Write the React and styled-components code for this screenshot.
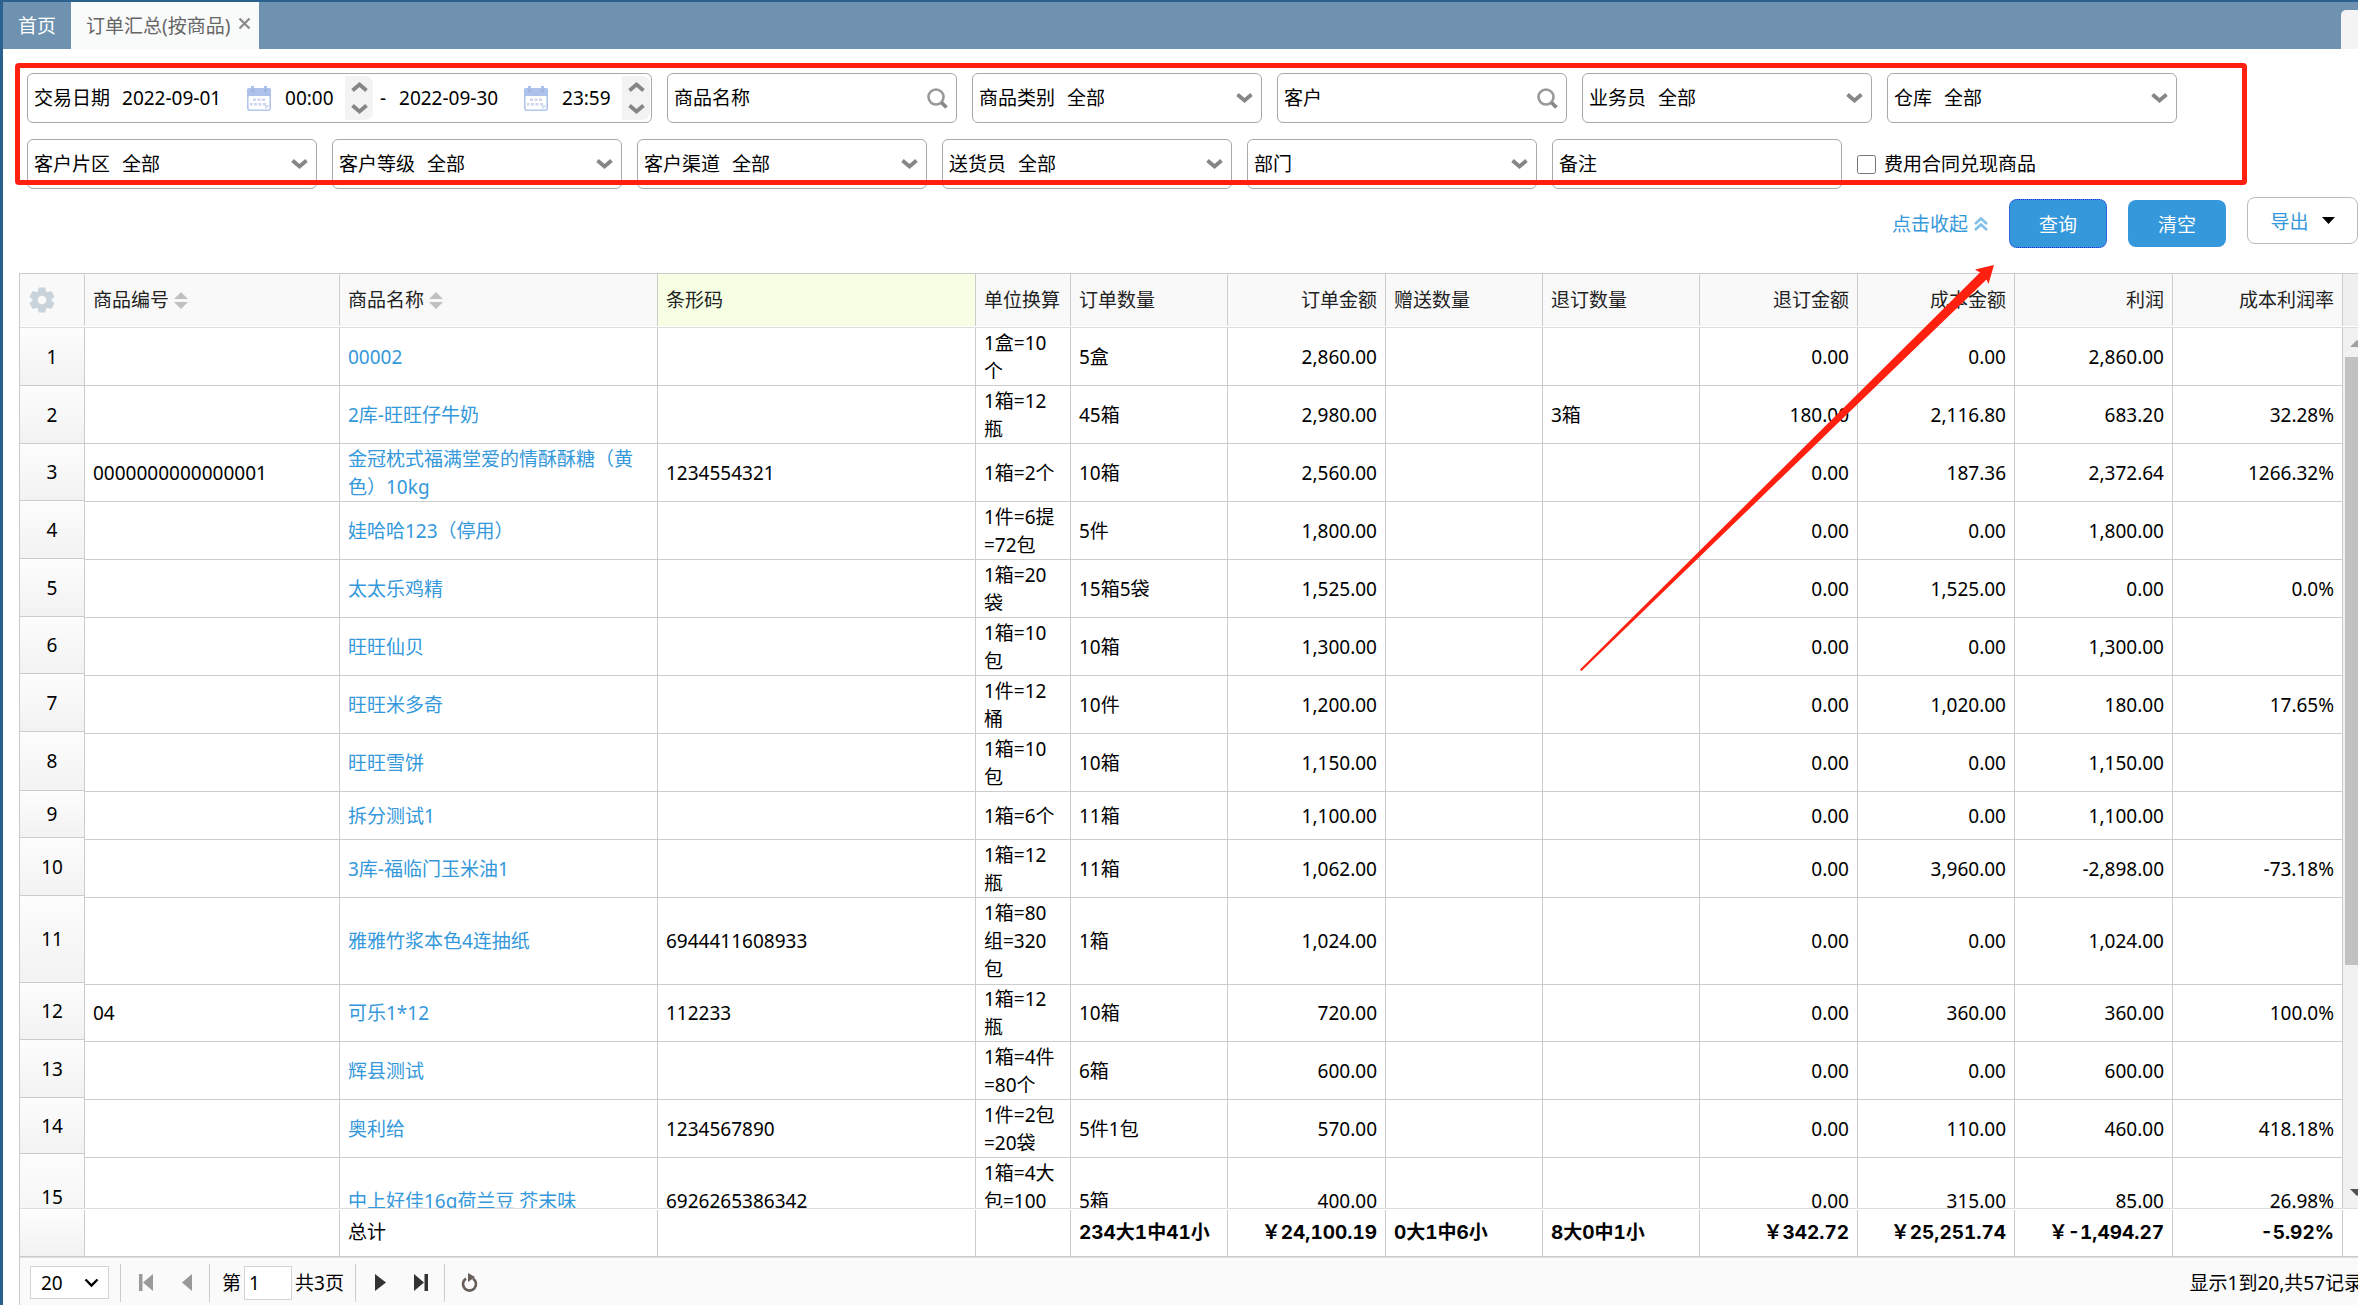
import React from "react";
import styled, { createGlobalStyle } from "styled-components";

const font = '"Noto Sans", "Noto Sans CJK SC", sans-serif';
const boldFont = 'Inter, "Noto Sans CJK SC", sans-serif';
const blue = "#3498db";
const line = "#cccccc";
const softLine = "#dddddd";
const red = "#ff2010";

const Global = createGlobalStyle`
  * { box-sizing: border-box; }
  body { margin: 0; background: #fff; overflow: hidden; }
  body, button, input, select { font-family: ${font}; font-size: 19px; color: #000; }
`;

const Page = styled.div`
  position: relative;
  display: flex;
  flex-direction: column;
  height: 100vh;
  min-height: 600px;
  border-top: 2px solid #2b618f;
  border-left: 3px solid #2b618f;
  overflow: hidden;
  line-height: 28px;
`;

/* ---------- tabs ---------- */
const TabBar = styled.nav`
  display: flex;
  flex: none;
  height: 47px;
  background: #6e92b0;
`;
const Tab = styled.div`
  display: flex;
  align-items: center;
  gap: 8px;
  padding: ${(p) => (p.$active ? "0 8px 0 15px" : "0 15px")};
  background: ${(p) => (p.$active ? "#f9fafa" : "transparent")};
`;
const TabLink = styled.a`
  color: ${(p) => (p.$active ? "#666" : "#fff")};
  text-decoration: none;
  white-space: nowrap;
`;
const PlainButton = styled.button`
  display: flex;
  align-items: center;
  justify-content: center;
  flex: none;
  padding: 0;
  border: 0;
  background: none;
`;
const CloseButton = styled(PlainButton)`
  align-self: flex-start;
  margin-top: 15px;
`;
const TabMenu = styled(PlainButton)`
  width: 17px;
  height: 39px;
  margin: 8px 0 0 auto;
  border-radius: 5px 0 0 0;
  background: #f4f4f4;
`;

/* ---------- filters ---------- */
const Filters = styled.form`
  position: relative;
  display: flex;
  flex: none;
  flex-direction: column;
  gap: 16px;
  padding: 24px 24px 0;
`;
const FilterRow = styled.div`
  display: flex;
  gap: 15px;
`;
const Field = styled.div`
  display: flex;
  align-items: center;
  width: ${(p) => (p.$wide ? "625px" : "290px")};
  height: 50px;
  padding: 0 ${(p) => (p.$wide ? "2px" : "8px")} 0 6px;
  border: 1px solid #a9a9a9;
  border-radius: 6px;
  background: #fff;
`;
const Label = styled.label`
  flex: none;
  margin-right: 12px;
`;
const TextBox = styled.input`
  flex: ${(p) => (p.$width ? "none" : "1")};
  width: ${(p) => p.$width || "auto"};
  min-width: 0;
  height: 28px;
  padding: 0;
  border: 0;
  outline: 0;
  background: none;
`;
const Select = styled.select`
  flex: 1;
  min-width: 0;
  height: 28px;
  margin-right: -17px;
  padding: 0;
  border: 0;
  outline: 0;
  appearance: none;
  background: none;
`;
const CalendarButton = styled(PlainButton)`
  margin-right: 14px;
`;
const Spinner = styled.div`
  display: flex;
  flex: none;
  flex-direction: column;
  justify-content: space-between;
  width: 28px;
  height: 44px;
  padding: 6px 0;
  border-radius: 0 8px 8px 0;
  background: #f3f3f3;
`;
const Dash = styled.span`
  width: 26px;
  flex: none;
  padding-left: 7px;
`;
const CheckField = styled.label`
  display: flex;
  align-items: center;
  gap: 8px;
`;
const CheckBox = styled.input`
  width: 19px;
  height: 19px;
  margin: 0;
`;
const Highlight = styled.div`
  position: absolute;
  top: 14px;
  right: 111px;
  bottom: 4px;
  left: 12px;
  border: 5px solid ${red};
  border-radius: 4px;
  pointer-events: none;
`;

/* ---------- actions ---------- */
const Actions = styled.div`
  display: flex;
  flex: none;
  align-items: center;
  justify-content: flex-end;
  gap: 21px;
  height: 53px;
  margin: 8px 0 23px;
`;
const Collapse = styled.a`
  display: flex;
  align-items: center;
  gap: 6px;
  color: ${blue};
  text-decoration: none;
`;
const Primary = styled.button`
  width: 98px;
  height: ${(p) => (p.$focused ? "49px" : "47px")};
  padding: 0;
  border: ${(p) => (p.$focused ? "1px dotted #2a2ae0" : "0")};
  border-radius: 8px;
  background: ${blue};
  color: #fff;
`;
const ExportButton = styled.button`
  display: flex;
  align-items: center;
  justify-content: center;
  align-self: flex-start;
  gap: 13px;
  width: 111px;
  height: 47px;
  padding: 0;
  border: 1px solid #bbb;
  border-radius: 8px;
  background: #fff;
  color: ${blue};
`;

/* ---------- grid ---------- */
const Grid = styled.section`
  display: flex;
  flex: 1;
  flex-direction: column;
  min-height: 0;
  margin-left: 16px;
  border-left: 1px solid ${line};
`;
const Band = styled.div`
  display: flex;
  flex: none;
`;
const HeadBand = styled(Band)`
  height: 55px;
  padding-bottom: 1px;
  border-top: 1px solid ${line};
  border-bottom: 1px solid ${softLine};
`;
const BodyBand = styled(Band)`
  flex: 1;
  align-items: flex-start;
  min-height: 0;
  overflow: hidden;
`;
const FootBand = styled(Band)`
  height: 49px;
  padding-top: 1px;
  border-top: 1px solid ${softLine};
  border-bottom: 1px solid ${line};
  font-family: ${boldFont};
`;
const Table = styled.table`
  flex: 1;
  width: 0;
  border-spacing: 0;
  table-layout: fixed;
`;
const Numbers = styled.table`
  flex: none;
  width: 65px;
  border-spacing: 0;
  table-layout: fixed;
`;
const Head = styled.th`
  height: 52px;
  padding: 0 8px;
  border-right: 1px solid ${line};
  background: ${(p) => (p.$marked ? "#f6ffe3" : "#f9f9f9")};
  color: #222;
  font-weight: 400;
  text-align: ${(p) => (p.$right ? "right" : "left")};
  white-space: nowrap;
`;
const Sortable = styled.span`
  display: flex;
  align-items: center;
  gap: 5px;
`;
const Row = styled.tr`
  height: ${(p) => p.$height}px;
`;
const Cell = styled.td`
  padding: 0 8px;
  border-right: 1px solid ${line};
  border-bottom: 1px solid ${line};
  text-align: ${(p) => (p.$right ? "right" : "left")};
`;
const NumberCell = styled.th`
  padding: 0;
  border-right: 1px solid ${line};
  border-bottom: 1px solid ${line};
  background: linear-gradient(#fdfdfd, #f2f2f2);
  font-weight: 400;
`;
const TotalCell = styled(Cell)`
  height: 46px;
  border-bottom: 0;
  font-weight: ${(p) => (p.$plain ? 400 : 700)};
  font-variant-numeric: tabular-nums;
  white-space: nowrap;
`;
const TotalNumber = styled(NumberCell)`
  height: 46px;
  border-bottom: 0;
`;
const GearCell = styled(Head)`
  padding: 0 0 0 9px;
`;
const ProductLink = styled.a`
  color: ${blue};
  text-decoration: none;
`;
const Edge = styled.div`
  flex: none;
  width: 15px;
  background: ${(p) => (p.$filled ? "#efefef" : "#fff")};
`;
const Scroll = styled(Edge)`
  display: flex;
  flex-direction: column;
  justify-content: space-between;
  align-self: stretch;
  padding: 12px 0 12px 2px;
  background: #f1f1f1;
  overflow: hidden;
`;
const Track = styled.div`
  flex: 1;
  padding: 10px 0;
`;
const Thumb = styled.div`
  height: 74%;
  background: #c1c1c1;
`;

/* ---------- pager ---------- */
const Pager = styled.footer`
  display: flex;
  flex: none;
  align-items: center;
  height: 48px;
  padding: 2px 0 0 10px;
  border-top: 1px solid ${softLine};
  background: #fafafa;
  overflow: hidden;
`;
const PageSize = styled.div`
  display: flex;
  align-items: center;
  width: 79px;
  height: 33px;
  padding: 0 9px 0 10px;
  border: 1px solid #d4d4d4;
  background: #fff;
`;
const Divider = styled.span`
  width: 1px;
  height: 38px;
  margin: 0 ${(p) => (p.$wide ? "12px" : "10px")} 0 11px;
  background: ${line};
`;
const PageInput = styled.input`
  width: 48px;
  height: 34px;
  margin: 0 3px;
  padding: 0 4px;
  border: 1px solid #d4d4d4;
  background: #fff;
`;
const PageButtons = styled.div`
  display: flex;
  gap: 12px;
  margin-right: -3px;
`;
const PageButton = styled(PlainButton)`
  width: 29px;
  height: 30px;
`;
const Status = styled.span`
  flex: none;
  margin: 0 -5px 0 auto;
  white-space: nowrap;
`;

const Arrow = styled.svg`
  position: absolute;
  top: 263px;
  right: 364px;
  pointer-events: none;
`;

/* ---------- icons ---------- */
const Glyph = styled.svg`
  display: block;
  flex: none;
  pointer-events: none;
`;
const Chevron = ({ up }) => (
  <Glyph width="17" height="10" viewBox="0 0 17 10">
    <path d={up ? "M1.500 8.500 8.500 2.500 15.500 8.500" : "M1.500 1.500 8.500 7.500 15.500 1.500"} fill="none" stroke="#868686" strokeWidth="3.800" />
  </Glyph>
);
const Search = () => (
  <Glyph width="21" height="21" viewBox="0 0 21 21">
    <circle cx="9" cy="9" r="7.500" fill="none" stroke="#999" strokeWidth="2.600" />
    <path d="M14.500 14.500 19.500 19.500" stroke="#888" strokeWidth="3.800" />
  </Glyph>
);
const Calendar = () => (
  <Glyph width="24" height="25" viewBox="0 0 24 25">
    <rect x="0.800" y="3" width="22.400" height="21.300" rx="2" fill="#fff" stroke="#b2c6ec" strokeWidth="1.600" />
    <path d="M0 4a2 2 0 0 1 2-2h2V0h3v2h10V0h3v2h2a2 2 0 0 1 2 2v6H0z" fill="#adc2ea" />
    <path d="M4 3h3v3H4zM17 3h3v3h-3z" fill="#9fb4e0" />
    <path d="M6 12.500h3v2.500H6zM10.500 12.500h3v2.500h-3zM15 12.500h3v2.500h-3zM3 17h2.500v2.500H3zM7 17h3v2.500H7zM11.500 17h3v2.500h-3zM16 17h3v2.500h-3z" fill="#ccd6ee" />
    <path d="M18 24v-5h5z" fill="#d5e0f5" />
  </Glyph>
);
const Gear = () => (
  <Glyph width="26" height="26" viewBox="0 0 24 24">
    <path fillRule="evenodd" fill="#c9d3dc" d="M9 0.500h6l.7 3.500 1.500.9 3.400-1.200 3 5.200-2.700 2.300v1.600l2.700 2.300-3 5.200-3.400-1.200-1.500.9-.7 3.500H9l-.7-3.500-1.500-.9-3.400 1.200-3-5.200 2.700-2.300v-1.600L.4 8.900l3-5.200 3.400 1.200 1.500-.9zM12 8a4 4 0 1 0 0 8 4 4 0 0 0 0-8z" />
  </Glyph>
);
const SortIcon = () => (
  <Glyph width="14" height="17" viewBox="0 0 14 17">
    <path d="M0 7 7 0l7 7zM0 10h14l-7 7z" fill="#c0c0c0" />
  </Glyph>
);
const Collapser = () => (
  <Glyph width="14" height="14" viewBox="0 0 14 14">
    <path d="M1 7 7 1.500 13 7M1 13 7 7.500 13 13" fill="none" stroke="#7fbfea" strokeWidth="2.600" />
  </Glyph>
);

/* ---------- data ---------- */
const columns = [
  { title: "商品编号", width: 255, sortable: true },
  { title: "商品名称", width: 318, sortable: true },
  { title: "条形码", width: 318, marked: true },
  { title: "单位换算", width: 95 },
  { title: "订单数量", width: 157 },
  { title: "订单金额", width: 158, right: true },
  { title: "赠送数量", width: 157 },
  { title: "退订数量", width: 157 },
  { title: "退订金额", width: 158, right: true },
  { title: "成本金额", width: 157, right: true },
  { title: "利润", width: 158, right: true },
  { title: "成本利润率", width: 170, right: true },
];

const rows = [
  [58, 58, "", "00002", "", "1盒=10个", "5盒", "2,860.00", "", "", "0.00", "0.00", "2,860.00", ""],
  [58, 58, "", "2库-旺旺仔牛奶", "", "1箱=12瓶", "45箱", "2,980.00", "", "3箱", "180.00", "2,116.80", "683.20", "32.28%"],
  [58, 57, "0000000000000001", "金冠枕式福满堂爱的情酥酥糖（黄色）10kg", "1234554321", "1箱=2个", "10箱", "2,560.00", "", "", "0.00", "187.36", "2,372.64", "1266.32%"],
  [58, 58, "", "娃哈哈123（停用）", "", "1件=6提=72包", "5件", "1,800.00", "", "", "0.00", "0.00", "1,800.00", ""],
  [58, 58, "", "太太乐鸡精", "", "1箱=20袋", "15箱5袋", "1,525.00", "", "", "0.00", "1,525.00", "0.00", "0.0%"],
  [58, 57, "", "旺旺仙贝", "", "1箱=10包", "10箱", "1,300.00", "", "", "0.00", "0.00", "1,300.00", ""],
  [58, 58, "", "旺旺米多奇", "", "1件=12桶", "10件", "1,200.00", "", "", "0.00", "1,020.00", "180.00", "17.65%"],
  [58, 59, "", "旺旺雪饼", "", "1箱=10包", "10箱", "1,150.00", "", "", "0.00", "0.00", "1,150.00", ""],
  [48, 47, "", "拆分测试1", "", "1箱=6个", "11箱", "1,100.00", "", "", "0.00", "0.00", "1,100.00", ""],
  [58, 58, "", "3库-福临门玉米油1", "", "1箱=12瓶", "11箱", "1,062.00", "", "", "0.00", "3,960.00", "-2,898.00", "-73.18%"],
  [87, 87, "", "雅雅竹浆本色4连抽纸", "6944411608933", "1箱=80组=320包", "1箱", "1,024.00", "", "", "0.00", "0.00", "1,024.00", ""],
  [57, 57, "04", "可乐1*12", "112233", "1箱=12瓶", "10箱", "720.00", "", "", "0.00", "360.00", "360.00", "100.0%"],
  [58, 58, "", "辉县测试", "", "1箱=4件=80个", "6箱", "600.00", "", "", "0.00", "0.00", "600.00", ""],
  [58, 56, "", "奥利给", "1234567890", "1件=2包=20袋", "5件1包", "570.00", "", "", "0.00", "110.00", "460.00", "418.18%"],
  [87, 87, "", "中上好佳16g荷兰豆 芥末味", "6926265386342", "1箱=4大包=100包", "5箱", "400.00", "", "", "0.00", "315.00", "85.00", "26.98%"],
];

const totals = ["", "总计", "", "", "234大1中41小", "￥24,100.19", "0大1中6小", "8大0中1小", "￥342.72", "￥25,251.74", "￥-1,494.27", "-5.92%"];

const Columns = () => (
  <colgroup>
    {columns.map((c) => (
      <col key={c.title} width={c.width} />
    ))}
  </colgroup>
);

const Choice = ({ id, label, value = "全部" }) => (
  <Field>
    <Label htmlFor={id}>{label}</Label>
    <Select id={id} defaultValue={value}>
      <option value={value}>{value}</option>
    </Select>
    <Chevron />
  </Field>
);

const TextField = ({ id, label, search }) => (
  <Field>
    <Label htmlFor={id}>{label}</Label>
    <TextBox id={id} type="text" />
    {search && (
      <PlainButton type="button" aria-label={label}>
        <Search />
      </PlainButton>
    )}
  </Field>
);

const Moment = ({ id, date, time }) => (
  <>
    <TextBox id={id} type="text" defaultValue={date} $width="125px" aria-label="日期" />
    <CalendarButton type="button" aria-label="日历">
      <Calendar />
    </CalendarButton>
    <TextBox type="text" defaultValue={time} $width="60px" aria-label="时间" />
    <Spinner>
      <PlainButton type="button" aria-label="+">
        <Chevron up />
      </PlainButton>
      <PlainButton type="button" aria-label="-">
        <Chevron />
      </PlainButton>
    </Spinner>
  </>
);

export default function App() {
  return (
    <Page>
      <Global />
      <TabBar>
        <Tab>
          <TabLink href="#home">首页</TabLink>
        </Tab>
        <Tab $active>
          <TabLink href="#orders" $active>订单汇总(按商品)</TabLink>
          <CloseButton type="button" aria-label="关闭">
            <Glyph width="13" height="13" viewBox="0 0 13 13">
              <path d="M1.500 1.500 11.500 11.500M11.500 1.500 1.500 11.500" stroke="#8a8a8a" strokeWidth="2.200" />
            </Glyph>
          </CloseButton>
        </Tab>
        <TabMenu type="button" aria-label="菜单" />
      </TabBar>

      <Filters onSubmit={(e) => e.preventDefault()}>
        <FilterRow>
          <Field $wide>
            <Label htmlFor="from">交易日期</Label>
            <Moment id="from" date="2022-09-01" time="00:00" />
            <Dash>-</Dash>
            <Moment id="to" date="2022-09-30" time="23:59" />
          </Field>
          <TextField id="product" label="商品名称" search />
          <Choice id="category" label="商品类别" />
          <TextField id="customer" label="客户" search />
          <Choice id="salesman" label="业务员" />
          <Choice id="warehouse" label="仓库" />
        </FilterRow>
        <FilterRow>
          <Choice id="area" label="客户片区" />
          <Choice id="level" label="客户等级" />
          <Choice id="channel" label="客户渠道" />
          <Choice id="courier" label="送货员" />
          <Choice id="department" label="部门" value="" />
          <TextField id="remark" label="备注" />
          <CheckField>
            <CheckBox type="checkbox" />
            费用合同兑现商品
          </CheckField>
        </FilterRow>
        <Highlight />
      </Filters>

      <Actions>
        <Collapse href="#collapse">
          点击收起
          <Collapser />
        </Collapse>
        <Primary type="button" $focused>查询</Primary>
        <Primary type="button">清空</Primary>
        <ExportButton type="button">
          导出
          <Glyph width="13" height="7" viewBox="0 0 13 7">
            <path d="M0 0h13L6.500 7z" fill="#000" />
          </Glyph>
        </ExportButton>
      </Actions>

      <Grid>
        <HeadBand>
          <Numbers>
            <thead>
              <tr>
                <GearCell>
                  <Gear />
                </GearCell>
              </tr>
            </thead>
          </Numbers>
          <Table>
            <Columns />
            <thead>
              <tr>
                {columns.map((c) => (
                  <Head key={c.title} $right={c.right} $marked={c.marked}>
                    {c.sortable ? (
                      <Sortable>
                        {c.title}
                        <SortIcon />
                      </Sortable>
                    ) : (
                      c.title
                    )}
                  </Head>
                ))}
              </tr>
            </thead>
          </Table>
          <Edge $filled />
        </HeadBand>

        <BodyBand>
          <Numbers>
            <tbody>
              {rows.map(([, h], i) => (
                <Row key={i} $height={h}>
                  <NumberCell>{i + 1}</NumberCell>
                </Row>
              ))}
            </tbody>
          </Numbers>
          <Table>
            <Columns />
            <tbody>
              {rows.map(([h, , ...cells], i) => (
                <Row key={i} $height={h}>
                  {cells.map((text, c) => (
                    <Cell key={c} $right={columns[c].right}>
                      {c === 1 ? <ProductLink href="#product">{text}</ProductLink> : text}
                    </Cell>
                  ))}
                </Row>
              ))}
            </tbody>
          </Table>
          <Scroll>
            <Glyph width="22" height="7" viewBox="0 0 22 7">
              <path d="M5 7 12 0l7 7z" fill="#a0a0a0" />
            </Glyph>
            <Track>
              <Thumb />
            </Track>
            <Glyph width="22" height="7" viewBox="0 0 22 7">
              <path d="M5 0h14l-7 7z" fill="#505050" />
            </Glyph>
          </Scroll>
        </BodyBand>

        <FootBand>
          <Numbers>
            <tbody>
              <tr>
                <TotalNumber />
              </tr>
            </tbody>
          </Numbers>
          <Table>
            <Columns />
            <tbody>
              <tr>
                {totals.map((text, c) => (
                  <TotalCell key={c} $right={columns[c].right} $plain={c === 1}>
                    {text}
                  </TotalCell>
                ))}
              </tr>
            </tbody>
          </Table>
          <Edge />
        </FootBand>

        <Pager>
          <PageSize>
            <Select defaultValue="20" aria-label="每页">
              <option>20</option>
            </Select>
            <Glyph width="15" height="10" viewBox="0 0 15 10">
              <path d="M1.500 1.500 7.500 7.500 13.500 1.500" fill="none" stroke="#000" strokeWidth="2.400" />
            </Glyph>
          </PageSize>
          <Divider />
          <PageButtons>
            <PageButton type="button" aria-label="首页">
              <Glyph width="14" height="17" viewBox="0 0 14 17">
                <path d="M0 0h3.500v17H0zM14 0v17L4 8.500z" fill="#999" />
              </Glyph>
            </PageButton>
            <PageButton type="button" aria-label="上一页">
              <Glyph width="10" height="17" viewBox="0 0 10 17">
                <path d="M10 0v17L0 8.500z" fill="#999" />
              </Glyph>
            </PageButton>
          </PageButtons>
          <Divider $wide />
          <label htmlFor="page">第</label>
          <PageInput id="page" defaultValue="1" />
          <span>共3页</span>
          <Divider />
          <PageButtons>
            <PageButton type="button" aria-label="下一页">
              <Glyph width="11" height="17" viewBox="0 0 11 17">
                <path d="M0 0v17l11-8.500z" fill="#333" />
              </Glyph>
            </PageButton>
            <PageButton type="button" aria-label="末页">
              <Glyph width="14" height="17" viewBox="0 0 14 17">
                <path d="M0 0v17l10-8.500zM10.500 0H14v17h-3.500z" fill="#333" />
              </Glyph>
            </PageButton>
          </PageButtons>
          <Divider />
          <PageButton type="button" aria-label="刷新">
            <Glyph width="17" height="20" viewBox="0 0 17 20">
              <path d="M5 5.600a6.500 6.500 0 1 0 7 0" fill="none" stroke="#665c58" strokeWidth="2.600" />
              <path d="M7 0l7 4-7 5z" fill="#665c58" />
            </Glyph>
          </PageButton>
          <Status>显示1到20,共57记录</Status>
        </Pager>
      </Grid>

      <Arrow width="414" height="406" viewBox="0 0 414 406">
        <path d="M414 0 395 4.500 400 7.500 0 404.500 1.500 406 406.500 14.500 408.500 19z" fill={red} />
      </Arrow>
    </Page>
  );
}
